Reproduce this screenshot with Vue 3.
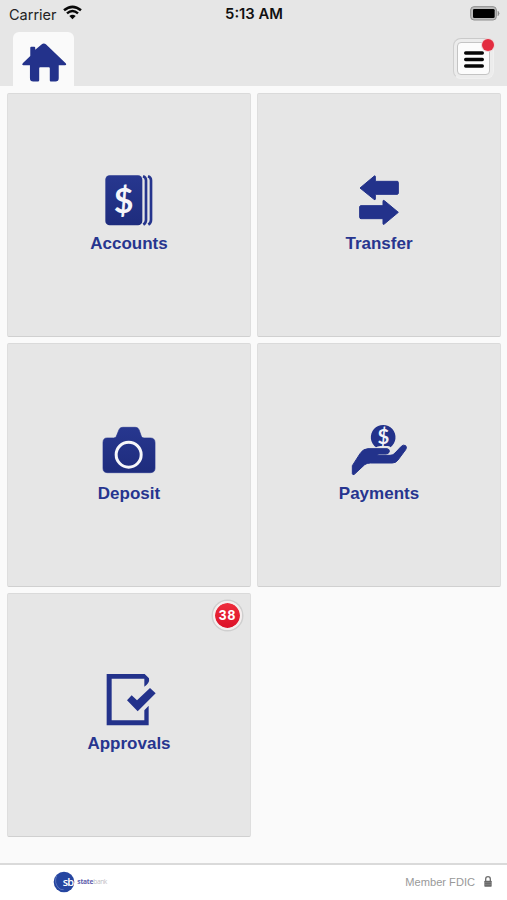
<script setup>
const tiles = [
  { id: 'accounts', label: 'Accounts' },
  { id: 'transfer', label: 'Transfer' },
  { id: 'deposit', label: 'Deposit' },
  { id: 'payments', label: 'Payments' },
  { id: 'approvals', label: 'Approvals', badge: 38 },
]
</script>

<template>
  <div class="screen">
    <header class="header">
      <div class="status">
        <div class="carrier">
          <span>Carrier</span>
          <svg class="wifi" viewBox="0 0 57 45">
            <path d="M3 16Q28.500 -5 54 16M12 25Q28.500 11 45 25" fill="none" stroke="#080808" stroke-width="7.500" />
            <path d="M19 33Q28.500 25 38 33L28.500 43Z" fill="#080808" />
          </svg>
        </div>
        <span class="time">5:13 AM</span>
        <svg class="battery" viewBox="0 0 93 45">
          <rect x="2" y="2" width="77" height="40" rx="10" fill="#bcbcbc" stroke="#8e8e8e" stroke-width="3" />
          <rect x="9" y="9" width="65" height="27" rx="4" fill="#000" />
          <path d="M84 16Q91 22 84 29Z" fill="#8e8e8e" stroke="#8e8e8e" stroke-width="2" />
        </svg>
      </div>
      <div class="nav">
        <div class="home">
          <svg viewBox="0 0 136 120">
            <path d="M25 34V14Q25 11 28 11H37Q40 11 40 14V20L59 4Q66 -2 73 4L132 61Q136 66 130 67H111V106Q111 116 101 116H87Q84 116 84 112V76Q84 73 81 73H55Q52 73 52 76V112Q52 116 48 116H34Q24 116 24 106V67H4Q-2 66 3 60L25 39Z" />
          </svg>
        </div>
        <div class="menu">
          <div class="menu-face">
            <svg viewBox="0 0 60 51">
              <path d="M5 6H55M5 25.500H55M5 45H55" stroke="#060606" stroke-width="10" stroke-linecap="round" />
            </svg>
          </div>
          <span class="dot"></span>
        </div>
      </div>
    </header>

    <main class="grid">
      <div v-for="t in tiles" :key="t.id" class="tile">
        <svg class="icon" viewBox="-3 0 300 195">
          <defs>
            <linearGradient id="ink" x1="0" y1="0" x2="0" y2="1">
              <stop offset="0" stop-color="#27378f" />
              <stop offset="1" stop-color="#1e2c7d" />
            </linearGradient>
          </defs>
          <g v-if="t.id === 'accounts'">
            <rect x="76" y="31" width="111" height="150" rx="13" fill="url(#ink)" />
            <path d="M189 34Q198 37 198 46V165Q198 174 190 179M204 34Q213 37 213 46V165Q213 174 205 179" class="pages" />
            <text x="131" y="144" text-anchor="middle" class="dollar">$</text>
          </g>
          <g v-else-if="t.id === 'transfer'" class="round">
            <path d="M90 69L133 33Q136 31 136 36V49H202Q205 49 205 53V84Q205 88 201 88H136V102Q136 106 132 103Z" />
            <path d="M205 142L163 107Q159 104 159 109V122H93Q89 122 89 126V157Q89 161 93 161H159V176Q159 180 163 177Z" />
          </g>
          <g v-else-if="t.id === 'deposit'">
            <path d="M81 69H101Q107 69 109 64L117 44Q120 37 128 37H166Q174 37 177 44L184 64Q186 69 192 69H211Q225 69 225 83V160Q225 173 211 173H82Q69 173 69 160V83Q69 69 81 69Z" fill="url(#ink)" stroke="#23328b" stroke-width="2" />
            <circle cx="146" cy="119" r="37.500" fill="none" stroke="#f6f6fa" stroke-width="9" />
          </g>
          <g v-else-if="t.id === 'payments'">
            <path d="M138 97A37 37 0 1 1 181 97Q179 93 173 93L151 93Q142 94 138 97Z" />
            <text x="160" y="86" text-anchor="middle" class="coin">$</text>
            <path class="round" d="M67 152L90 116Q99 101 114 101H171Q179 102 178 110Q176 117 168 117H144L143 121H180Q190 121 195 114L214 94Q220 88 227 92Q232 97 227 104L204 135Q198 144 187 144H121Q111 144 104 149L73 178Q68 181 67 176Z" />
          </g>
          <g v-else>
            <path d="M80 27H194L207 40Q210 54 193 65V41H95V166H193V136L206 122V181H80Z" />
            <path d="M141 106L155 91L171 106L210 69L227 85L173 139Z" />
          </g>
        </svg>
        <span class="label">{{ t.label }}</span>
        <span v-if="t.badge" class="badge">{{ t.badge }}</span>
      </div>
    </main>

    <footer class="footer">
      <svg class="logo" viewBox="0 0 168 66">
        <circle cx="33" cy="33" r="31" fill="#2545a0" />
        <path d="M11 14Q2 35 17 51Q23 57 32 56" fill="none" stroke="#7188c5" stroke-width="2" />
        <text x="29" y="44" class="sb">sb</text>
        <text x="73" y="39" class="state" textLength="48">state</text>
        <text x="121" y="39" class="bank" textLength="42">bank</text>
      </svg>
      <div class="fdic">
        <span>Member FDIC</span>
        <svg viewBox="0 0 24 33">
          <path d="M5 16V9A7 7 0 0 1 19 9V16" fill="none" stroke="#707070" stroke-width="4" />
          <rect x="1" y="14" width="22" height="18" rx="2" fill="#686868" />
          <path d="M3 20H21M3 26H21" stroke="#999" stroke-width="1.500" />
        </svg>
      </div>
    </footer>
  </div>
</template>

<style>
body { margin: 0; }
</style>

<style scoped>
.screen {
  box-sizing: border-box;
  width: 507px;
  height: 900px;
  display: flex;
  flex-direction: column;
  overflow: hidden;
  background: #fafafa;
  font-family: "Liberation Sans", Arial, sans-serif;
}
svg { display: block; overflow: visible; fill: #23328b; }
.header { height: 86px; background: #e6e6e6; flex: none; }
.status {
  height: 28px;
  display: grid;
  grid-template-columns: 1fr auto 1fr;
  align-items: center;
  padding: 0 7px 0 9px;
  font-family: Inter, sans-serif;
  font-size: 14.5px;
  color: #222;
}
.carrier { display: flex; align-items: center; gap: 6px; }
.wifi { width: 19px; height: 15px; margin-top: -3px; }
.time { font-weight: 600; font-size: 14.8px; color: #111; margin-left: -1px; }
.battery { width: 31px; height: 15px; justify-self: end; margin: -2px -1px 0 0; }
.nav { height: 58px; display: flex; justify-content: space-between; padding: 0 13px 0 13px; }
.home {
  box-sizing: border-box;
  width: 61px;
  height: 54px;
  margin-top: 4px;
  padding: 10.5px 0 0 8.5px;
  background: #fafafa;
  border-radius: 6px 6px 0 0;
}
.home svg { width: 45px; height: 40px; }
.menu {
  position: relative;
  box-sizing: border-box;
  width: 41px;
  height: 41px;
  margin-top: 10px;
  padding: 3px;
  border: 1px solid #f0f0f0;
  border-top-color: #cacaca;
  border-left-color: #cfcfcf;
  border-radius: 8px;
  background: #ececec;
}
.menu-face {
  box-sizing: border-box;
  width: 33px;
  height: 33px;
  display: flex;
  align-items: center;
  justify-content: center;
  padding-top: 2px;
  border: 1px solid #c4c4c4;
  border-radius: 4px;
  background: #fcfcfc;
}
.menu-face svg { width: 20px; height: 17px; }
.dot {
  position: absolute;
  top: 0;
  right: -1px;
  width: 12px;
  height: 12px;
  border-radius: 50%;
  background: #e32c40;
  box-shadow: 0 0 0 1px #eed5d7;
}
.grid {
  flex: 1;
  display: grid;
  grid-template-columns: 244px 244px;
  grid-auto-rows: 244px;
  gap: 6px;
  align-content: start;
  padding: 6.5px 6px 0 7px;
}
.tile {
  position: relative;
  box-sizing: border-box;
  display: flex;
  flex-direction: column;
  align-items: center;
  padding-top: 71.5px;
  border: 1px solid #dedede;
  border-top-color: #dadada;
  border-bottom-color: #d0d0d0;
  border-radius: 2px;
  background: #e6e6e6;
}
.icon { width: 100px; height: 65px; flex: none; }
.label { margin-top: 3.5px; font-size: 17px; line-height: 20px; font-weight: 700; color: #27358f; }
.round { stroke: #23328b; stroke-width: 3; stroke-linejoin: round; }
.pages { fill: none; stroke: #26358d; stroke-width: 8; }
.dollar { font: 700 102px Lato, sans-serif; fill: #f6f6fa; }
.coin { font: 700 61px Lato, sans-serif; fill: #f2f2f8; }
.badge {
  position: absolute;
  top: 7.5px;
  right: 8.5px;
  width: 25px;
  height: 25px;
  border: 2px solid #f5eeee;
  border-radius: 50%;
  background: linear-gradient(#ee2d3c, #dc1027) padding-box;
  box-shadow: 0 0 0 1.5px #cfcfcf;
  color: #fff;
  font-size: 14px;
  font-weight: 700;
  line-height: 25px;
  letter-spacing: 1px;
  text-indent: 1px;
  text-align: center;
}
.footer {
  box-sizing: border-box;
  height: 37px;
  flex: none;
  display: flex;
  justify-content: space-between;
  align-items: center;
  padding: 0 15px 2px 53px;
  border-top: 2px solid #dadada;
  background: #fff;
}
.logo { width: 56px; height: 22px; }
.sb { font: 600 33px "Open Sans", sans-serif; letter-spacing: -2px; fill: #fff; }
.state { font: 700 20px "Open Sans", sans-serif; fill: #6260ad; }
.bank { font: 400 20px "Open Sans", sans-serif; fill: #bfc0c5; }
.fdic { display: flex; align-items: center; gap: 9px; font-size: 11.1px; color: #999; }
.fdic svg { width: 8px; height: 11px; margin-top: -1px; }
</style>
